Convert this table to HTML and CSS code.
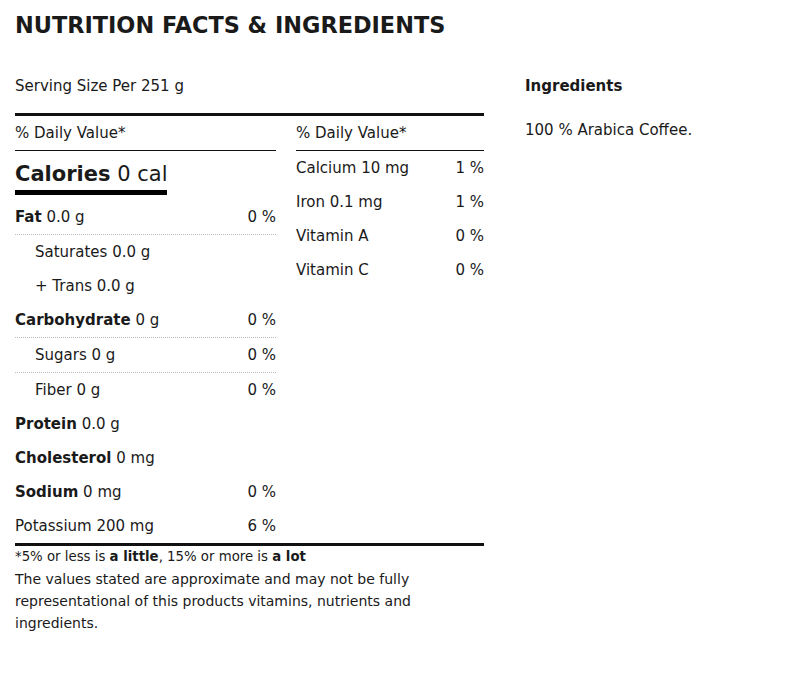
FILE: index.html
```html
<!DOCTYPE html>
<html lang="en">
<head>
<meta charset="utf-8">
<title>Nutrition Facts &amp; Ingredients</title>
<link rel="stylesheet" href="styles.css">
</head>
<body>
<div class="page">
  <h1 class="title">NUTRITION FACTS &amp; INGREDIENTS</h1>
  <div class="content">
    <div class="nutrition">
      <div class="serving">Serving Size Per 251 g</div>
      <div class="panel">
        <div class="col">
          <div class="dv">% Daily Value*</div>
          <div class="calories"><span class="cal"><b>Calories</b> 0 cal</span></div>
          <div class="row dotted"><span><b>Fat</b> 0.0 g</span><span>0 %</span></div>
          <div class="row indent"><span>Saturates 0.0 g</span></div>
          <div class="row indent"><span>+ Trans 0.0 g</span></div>
          <div class="row dotted"><span><b>Carbohydrate</b> 0 g</span><span>0 %</span></div>
          <div class="row indent dotted"><span>Sugars 0 g</span><span>0 %</span></div>
          <div class="row indent"><span>Fiber 0 g</span><span>0 %</span></div>
          <div class="row"><span><b>Protein</b> 0.0 g</span></div>
          <div class="row"><span><b>Cholesterol</b> 0 mg</span></div>
          <div class="row"><span><b>Sodium</b> 0 mg</span><span>0 %</span></div>
          <div class="row"><span>Potassium 200 mg</span><span>6 %</span></div>
        </div>
        <div class="col">
          <div class="dv">% Daily Value*</div>
          <div class="row"><span>Calcium 10 mg</span><span>1 %</span></div>
          <div class="row"><span>Iron 0.1 mg</span><span>1 %</span></div>
          <div class="row"><span>Vitamin A</span><span>0 %</span></div>
          <div class="row"><span>Vitamin C</span><span>0 %</span></div>
        </div>
      </div>
      <div class="footnote">
        <p class="note-scale">*5% or less is <b>a little</b>, 15% or more is <b>a lot</b></p>
        <p class="note-text">The values stated are approximate and may not be fully representational of this products vitamins, nutrients and ingredients.</p>
      </div>
    </div>
    <div class="ingredients">
      <h2 class="ing-title">Ingredients</h2>
      <p class="ing-text">100 % Arabica Coffee.</p>
    </div>
  </div>
</div>
</body>
</html>
```

FILE: styles.css
```css
* { box-sizing: content-box; }
body {
  margin: 0;
  font-family: "DejaVu Sans", sans-serif;
  color: #1a1a1a;
  background: #fff;
}
.page {
  padding: 10px 15px;
}
.title {
  margin: 0;
  font-size: 22.4px;
  line-height: 30px;
  font-weight: 700;
}
.content {
  display: flex;
  margin-top: 36px;
}
.nutrition {
  width: 469px;
}
.serving {
  font-size: 15px;
  line-height: 20px;
  padding-bottom: 17px;
}
.panel {
  border-top: 3px solid #111;
  display: grid;
  grid-template-columns: 261px 188px;
  column-gap: 20px;
}
.dv {
  height: 34px;
  display: flex;
  align-items: center;
  border-bottom: 1px solid #111;
  font-size: 15px;
}
.calories {
  padding-top: 10px;
  margin-bottom: 5px;
}
.cal {
  display: inline-block;
  font-size: 21px;
  line-height: 26px;
  padding-bottom: 3px;
  border-bottom: 5px solid #000;
}
.row {
  height: 34px;
  display: flex;
  align-items: center;
  justify-content: space-between;
  font-size: 15px;
}
.row.dotted {
  border-bottom: 1px dotted #bbb;
}
.row.indent {
  padding-left: 20px;
}
.footnote {
  border-top: 3px solid #111;
  line-height: 22px;
}
.footnote p {
  margin: 0;
}
.note-scale {
  font-size: 13.3px;
}
.note-text {
  font-size: 14px;
}
.ingredients {
  margin-left: 41px;
}
.ing-title {
  margin: 0;
  font-size: 15px;
  line-height: 20px;
  font-weight: 700;
}
.ing-text {
  margin: 24px 0 0;
  font-size: 15px;
  line-height: 20px;
}
```
